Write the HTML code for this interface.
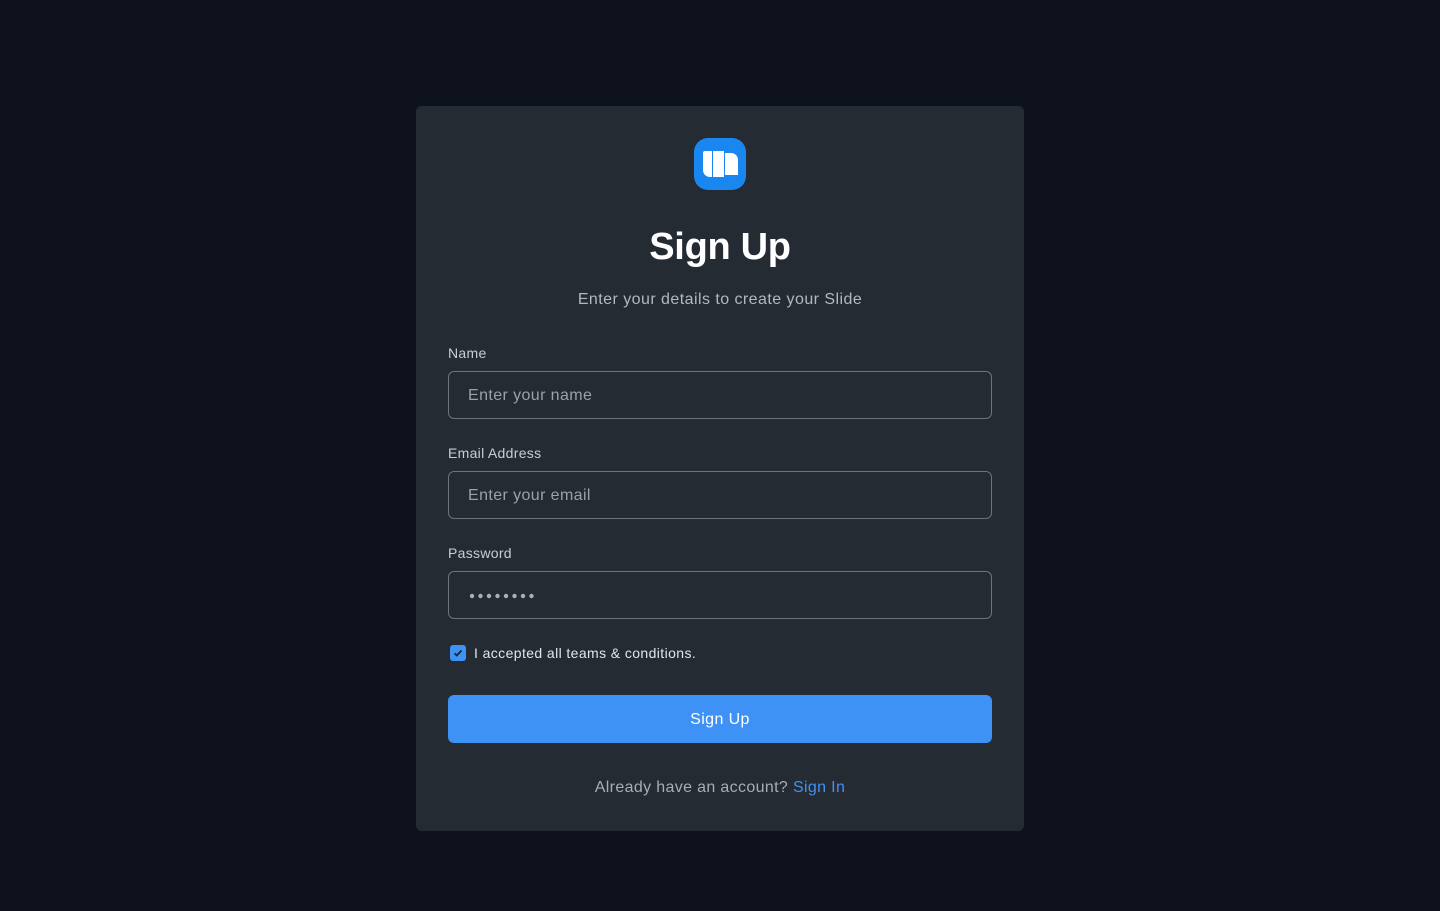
<!DOCTYPE html>
<html><head><meta charset="utf-8"><style>
*{box-sizing:border-box;margin:0;padding:0}
body{width:1440px;height:911px;background:#0e121c;font-family:"Liberation Sans",sans-serif;position:relative;overflow:hidden}
.card{position:absolute;left:416px;top:106px;width:608px;height:725px;background:#252b33;border-radius:6px}
.abs{position:absolute}
h1{position:absolute;left:0;width:608px;top:120px;text-align:center;color:#fff;font-size:38px;font-weight:600;letter-spacing:-0.3px}
.sub{top:185px;left:0;width:608px;text-align:center;color:#b3b8c0;font-size:16px;letter-spacing:0.45px}
.lbl{left:32px;color:#c9ced6;font-size:14px;letter-spacing:0.3px}
.inp{left:32px;width:544px;height:48px;border:1px solid #6b7380;border-radius:6px;color:#9aa1ab;font-size:16px;padding:0 19px;line-height:48px;letter-spacing:0.4px}
.btn{left:32px;top:589px;width:544px;height:48px;background:#3f92f5;border-radius:6px;color:#fff;text-align:center;line-height:50px;font-size:16px;letter-spacing:0.4px}
</style></head><body>
<div class="card">
<svg class="abs" style="left:278px;top:32px" width="52" height="52" viewBox="0 0 52 52">
<rect width="52" height="52" rx="14" fill="#1a86f0"/>
<path d="M11 13h7v26h-2a7 7 0 0 1-7-7V15a2 2 0 0 1 2-2z" fill="#fff"/>
<rect x="19" y="13" width="11" height="26" fill="#fff"/>
<path d="M31 15h6a7 7 0 0 1 7 7v15h-13z" fill="#fff"/>
</svg>
<h1>Sign Up</h1>
<div class="abs sub">Enter your details to create your Slide</div>
<div class="abs lbl" style="top:239px">Name</div>
<div class="abs inp" style="top:265px">Enter your name</div>
<div class="abs lbl" style="top:339px">Email Address</div>
<div class="abs inp" style="top:365px">Enter your email</div>
<div class="abs lbl" style="top:439px">Password</div>
<div class="abs inp" style="top:465px"></div>
<svg class="abs" style="left:52px;top:486px" width="72" height="8"><g fill="#aab0b8"><circle cx="4" cy="4" r="2.2"/><circle cx="12.5" cy="4" r="2.2"/><circle cx="21" cy="4" r="2.2"/><circle cx="29.5" cy="4" r="2.2"/><circle cx="38" cy="4" r="2.2"/><circle cx="46.5" cy="4" r="2.2"/><circle cx="55" cy="4" r="2.2"/><circle cx="63.5" cy="4" r="2.2"/></g></svg>
<svg class="abs" style="left:34px;top:539px" width="16" height="16" viewBox="0 0 16 16"><rect width="16" height="16" rx="3" fill="#3f92f5"/><path d="M4.5 8.2l2.3 2.3 4.7-5" stroke="#1b2433" stroke-width="1.8" fill="none"/></svg>
<div class="abs" style="left:58px;top:539px;color:#e2e5ea;font-size:14px;letter-spacing:0.4px">I accepted all teams &amp; conditions.</div>
<div class="abs btn">Sign Up</div>
<div class="abs" style="left:0;width:608px;top:673px;text-align:center;color:#a7adb6;font-size:16px;letter-spacing:0.35px">Already have an account? <span style="color:#3f92f5">Sign In</span></div>
</div>
</body></html>
